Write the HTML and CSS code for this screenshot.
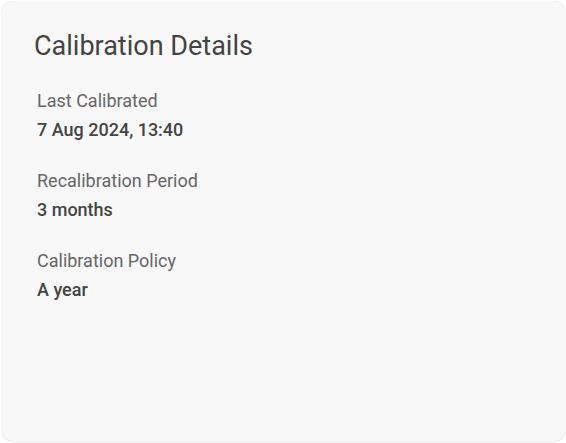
FILE: index.html
```html
<!DOCTYPE html>
<html>
<head>
<meta charset="utf-8">
<link rel="stylesheet" href="styles.css">
</head>
<body>
<div class="card">
  <h2 class="title">Calibration Details</h2>
  <div class="field">
    <div class="label">Last Calibrated</div>
    <div class="value">7 Aug 2024, 13:40</div>
  </div>
  <div class="field">
    <div class="label">Recalibration Period</div>
    <div class="value">3 months</div>
  </div>
  <div class="field">
    <div class="label">Calibration Policy</div>
    <div class="value">A year</div>
  </div>
</div>
</body>
</html>
```
FILE: styles.css
```css
html, body {
  margin: 0;
  padding: 0;
  background: #ffffff;
  font-family: Roboto, "Liberation Sans", Arial, sans-serif;
}
body {
  padding: 1px 1px 2px 2px;
  height: 443px;
  box-sizing: border-box;
}
.card {
  box-sizing: border-box;
  height: 100%;
  background: #f8f8f8;
  border-radius: 10px;
  box-shadow: 0 0 1px rgba(0,0,0,0.18), 0 1px 2px rgba(0,0,0,0.06);
  padding: 29px 32px 0 32px;
}
.title {
  margin: 0 0 27px 0;
  font-size: 27px;
  line-height: 32px;
  font-weight: 400;
  color: #444444;
}
.field {
  margin: 0 0 27px 3px;
}
.label {
  font-size: 18px;
  line-height: 24px;
  color: #666666;
}
.value {
  margin-top: 5px;
  font-size: 18px;
  line-height: 24px;
  font-weight: 500;
  color: #444444;
}
```
